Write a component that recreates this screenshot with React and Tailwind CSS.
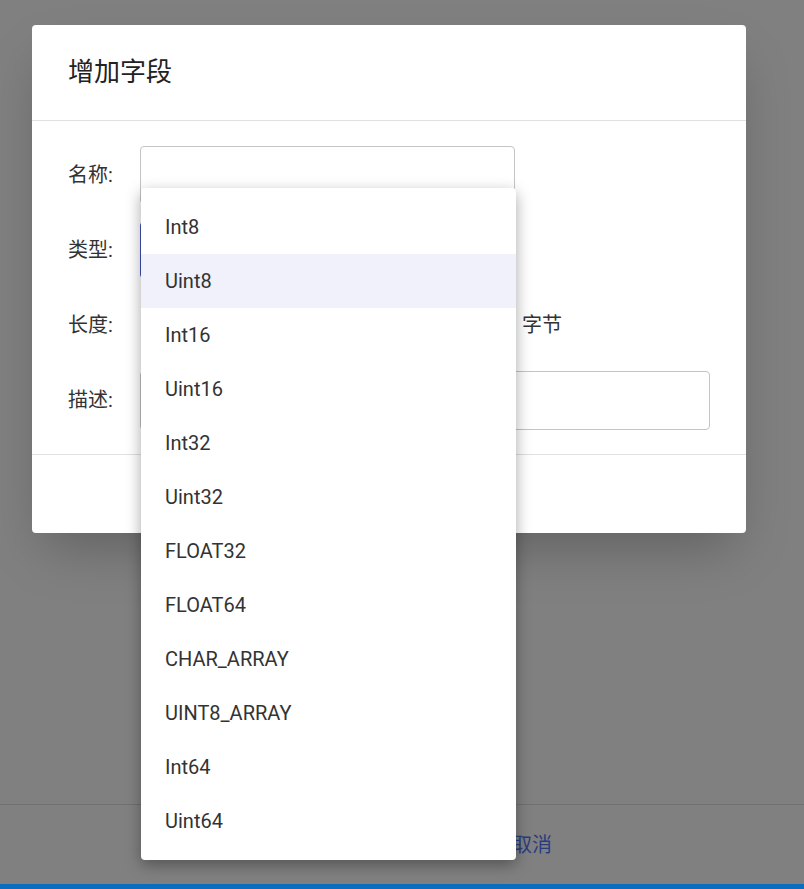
export default function App() {
  const items = ["Int8","Uint8","Int16","Uint16","Int32","Uint32","FLOAT32","FLOAT64","CHAR_ARRAY","UINT8_ARRAY","Int64","Uint64"];
  const font = { fontFamily: 'Roboto, "Noto Sans CJK SC", sans-serif' };
  return (
    <div className="relative w-[804px] h-[889px] bg-[#808080] overflow-hidden" style={font}>
      <div className="absolute left-0 right-0 top-[804px] h-px bg-[#707070]" />
      <div className="absolute left-[512px] top-[830px] text-[20px] text-[#2b3b80]">取消</div>
      <div className="absolute left-0 right-0 bottom-0 h-[5px] bg-[#0a6ec0]" />
      <div className="absolute left-[32px] top-[25px] w-[714px] h-[508px] bg-white rounded-[4px] shadow-2xl flex flex-col">
        <div className="h-[96px] flex items-center px-[36px] text-[26px] text-[#222] border-b border-[#e0e0e0]">增加字段</div>
        <div className="flex flex-col pt-[25px] px-[36px] gap-[17px] text-[20px] text-[#333] h-[334px] border-b border-[#e0e0e0]">
          <div className="flex items-center h-[58px]"><span className="w-[72px]">名称:</span><div className="w-[375px] h-[58px] border border-[#c4c4c4] rounded-[4px]" /></div>
          <div className="flex items-center h-[58px]"><span className="w-[72px]">类型:</span><div className="w-[375px] h-[56px] border-l-2 border-[#3f51b5] rounded-[4px]" /></div>
          <div className="flex items-center h-[58px]"><span className="w-[72px]">长度:</span><div className="w-[375px] h-[56px]" /><span className="ml-[7px]">字节</span></div>
          <div className="flex items-center h-[58px]"><span className="w-[72px]">描述:</span><div className="w-[570px] h-[59px] border border-[#c4c4c4] rounded-[4px]" /></div>
        </div>
      </div>
      <div className="absolute left-[141px] top-[188px] w-[375px] bg-white rounded-[4px] py-[12px] shadow-[0_5px_15px_rgba(0,0,0,0.35)]">
        {items.map((t, i) => (
          <div key={t} className={"h-[54px] flex items-center pl-[24px] text-[20px] text-[#333] " + (i === 1 ? "bg-[#f0f1fa]" : "")}>{t}</div>
        ))}
      </div>
    </div>
  );
}
